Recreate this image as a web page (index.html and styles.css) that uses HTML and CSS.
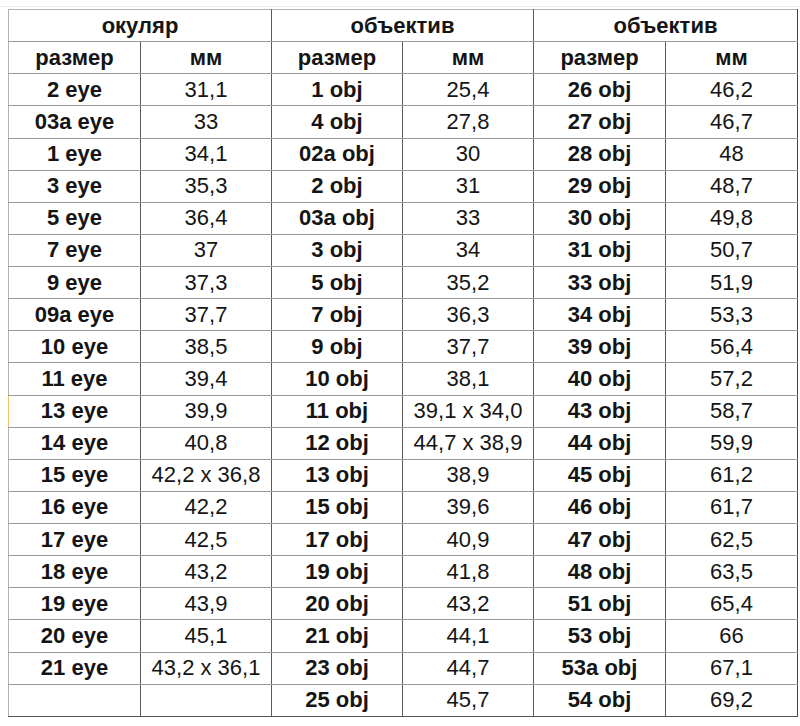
FILE: index.html
```html
<!DOCTYPE html>
<html lang="ru">
<head>
<meta charset="utf-8">
<title>Размеры</title>
<link rel="stylesheet" href="styles.css">
</head>
<body>
<div class="topline"></div>
<div class="wrap">
<table class="sizes">
<colgroup>
<col class="c1"><col class="c2"><col class="c3"><col class="c4"><col class="c5"><col class="c6">
</colgroup>
<thead>
<tr class="group"><th colspan="2">окуляр</th><th colspan="2">объектив</th><th colspan="2">объектив</th></tr>
<tr class="sub"><th>размер</th><th>мм</th><th>размер</th><th>мм</th><th>размер</th><th>мм</th></tr>
</thead>
<tbody>
<tr><td class="n">2 eye</td><td>31,1</td><td class="n">1 obj</td><td>25,4</td><td class="n">26 obj</td><td>46,2</td></tr>
<tr><td class="n">03a eye</td><td>33</td><td class="n">4 obj</td><td>27,8</td><td class="n">27 obj</td><td>46,7</td></tr>
<tr><td class="n">1 eye</td><td>34,1</td><td class="n">02a obj</td><td>30</td><td class="n">28 obj</td><td>48</td></tr>
<tr><td class="n">3 eye</td><td>35,3</td><td class="n">2 obj</td><td>31</td><td class="n">29 obj</td><td>48,7</td></tr>
<tr><td class="n">5 eye</td><td>36,4</td><td class="n">03a obj</td><td>33</td><td class="n">30 obj</td><td>49,8</td></tr>
<tr><td class="n">7 eye</td><td>37</td><td class="n">3 obj</td><td>34</td><td class="n">31 obj</td><td>50,7</td></tr>
<tr><td class="n">9 eye</td><td>37,3</td><td class="n">5 obj</td><td>35,2</td><td class="n">33 obj</td><td>51,9</td></tr>
<tr><td class="n">09a eye</td><td>37,7</td><td class="n">7 obj</td><td>36,3</td><td class="n">34 obj</td><td>53,3</td></tr>
<tr><td class="n">10 eye</td><td>38,5</td><td class="n">9 obj</td><td>37,7</td><td class="n">39 obj</td><td>56,4</td></tr>
<tr><td class="n">11 eye</td><td>39,4</td><td class="n">10 obj</td><td>38,1</td><td class="n">40 obj</td><td>57,2</td></tr>
<tr><td class="n mark">13 eye</td><td>39,9</td><td class="n">11 obj</td><td>39,1 x 34,0</td><td class="n">43 obj</td><td>58,7</td></tr>
<tr><td class="n">14 eye</td><td>40,8</td><td class="n">12 obj</td><td>44,7 x 38,9</td><td class="n">44 obj</td><td>59,9</td></tr>
<tr><td class="n">15 eye</td><td>42,2 x 36,8</td><td class="n">13 obj</td><td>38,9</td><td class="n">45 obj</td><td>61,2</td></tr>
<tr><td class="n">16 eye</td><td>42,2</td><td class="n">15 obj</td><td>39,6</td><td class="n">46 obj</td><td>61,7</td></tr>
<tr><td class="n">17 eye</td><td>42,5</td><td class="n">17 obj</td><td>40,9</td><td class="n">47 obj</td><td>62,5</td></tr>
<tr><td class="n">18 eye</td><td>43,2</td><td class="n">19 obj</td><td>41,8</td><td class="n">48 obj</td><td>63,5</td></tr>
<tr><td class="n">19 eye</td><td>43,9</td><td class="n">20 obj</td><td>43,2</td><td class="n">51 obj</td><td>65,4</td></tr>
<tr><td class="n">20 eye</td><td>45,1</td><td class="n">21 obj</td><td>44,1</td><td class="n">53 obj</td><td>66</td></tr>
<tr><td class="n">21 eye</td><td>43,2 x 36,1</td><td class="n">23 obj</td><td>44,7</td><td class="n">53a obj</td><td>67,1</td></tr>
<tr class="last"><td class="n"></td><td></td><td class="n">25 obj</td><td>45,7</td><td class="n">54 obj</td><td>69,2</td></tr>
</tbody>
</table>
</div>
</body>
</html>
```

FILE: styles.css
```css
html, body {
  margin: 0;
  padding: 0;
  background: #ffffff;
}

body {
  font-family: "Liberation Sans", Arial, sans-serif;
  color: #151515;
  width: 800px;
  height: 726px;
  overflow: hidden;
}

.topline {
  height: 6px;
  border-bottom: 1px solid #ececec;
}

.wrap {
  padding: 2px 0 0 8px;
}

.sizes {
  border-collapse: collapse;
  table-layout: fixed;
  width: 789px;
  font-size: 22px;
}

.c1 { width: 132px; }
.c2 { width: 131px; }
.c3 { width: 131px; }
.c4 { width: 131px; }
.c5 { width: 132px; }
.c6 { width: 132px; }

.sizes tr {
  height: 32.14px;
}

.sizes th,
.sizes td {
  padding: 0;
  text-align: center;
  vertical-align: middle;
  border-top: 1px solid #9a9a9a;
  border-bottom: 1px solid #9a9a9a;
  border-left: 1px solid #5a5a5a;
  border-right: 1px solid #5a5a5a;
  line-height: 1;
  white-space: nowrap;
}

.sizes th {
  font-weight: bold;
}

.sizes td {
  font-weight: normal;
}

.sizes td.n {
  font-weight: bold;
}

.sizes thead .group th {
  border-top: 1px solid #b4b4b4;
}

.sizes tr th:first-child,
.sizes tr td:first-child {
  border-left: 1px solid #b4b4b4;
}

.sizes tr td.mark {
  border-left: 1px solid #f2c46a;
}

.sizes tr th:last-child,
.sizes tr td:last-child {
  border-right: 1px solid #444444;
}

.sizes tr.last td {
  border-bottom: 1px solid #555555;
}
```
